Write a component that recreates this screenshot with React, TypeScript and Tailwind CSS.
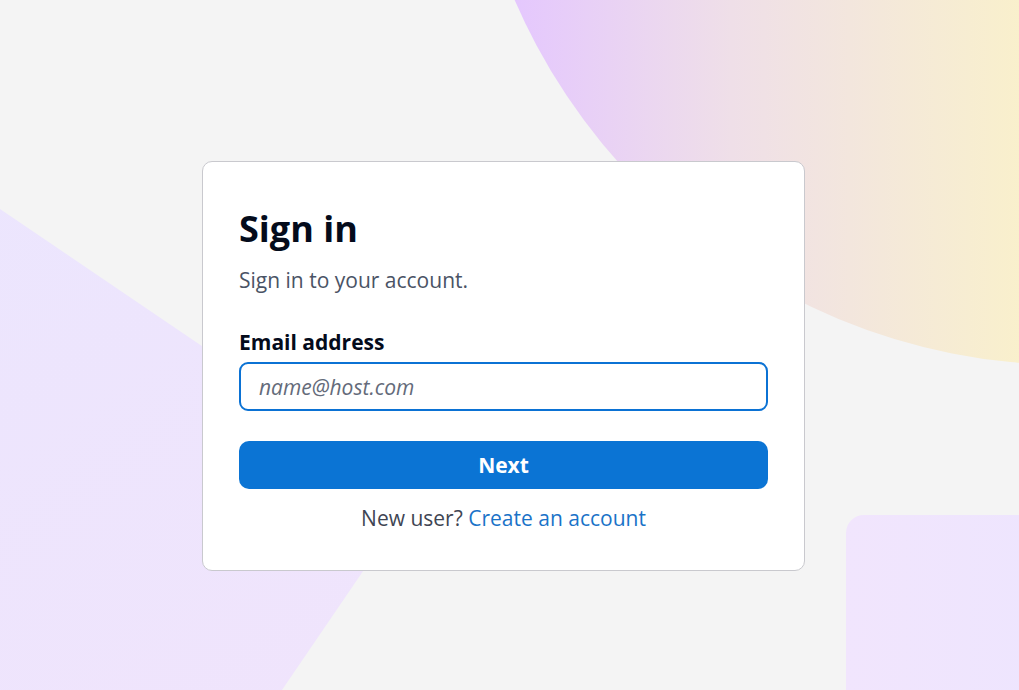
export default function App() {
  return (
    <div
      className="relative h-[690px] w-full overflow-hidden bg-[#f4f4f4] text-[#040b1b]"
      style={{ fontFamily: '"Open Sans", "Noto Sans", sans-serif' }}
    >
      {/* background decorations */}
      <div className="absolute left-[465px] top-[-845px] h-[1210px] w-[1210px] rounded-full bg-linear-to-r from-[#e4c6ff] from-[3%] via-[#efdfe8] via-[22%] to-[#f9f0cc] to-[46%]" />
      <div className="absolute inset-0 bg-linear-to-br from-[#ebe6fe] to-[#f2e3fb] [clip-path:polygon(0px_209px,417px_492px,282px_690px,0px_690px)]" />
      <div className="absolute left-[846px] top-[515px] h-[300px] w-[300px] rounded-[18px] bg-linear-to-r from-[#f1e5fd] to-[#ece5fe]" />

      <div className="relative flex justify-center pr-[12px] pt-[161px]">
        <div className="w-[603px] rounded-[10px] border border-[#c9c9ce] bg-white px-[36px] pb-[38px] pt-[45px]">
          <h1 className="text-[36px] font-bold leading-[44px]">Sign in</h1>
          <p className="mt-[15px] text-[21px] leading-[28px] text-[#4a5365]">Sign in to your account.</p>

          <label className="mt-[34px] block text-[21px] font-bold leading-[28px]">Email address</label>
          <input
            type="email"
            placeholder="name@host.com"
            className="mt-[6px] block h-[49px] w-full rounded-[9px] border-2 border-[#0b72d4] px-[18px] text-[21px] outline-none placeholder:italic placeholder:text-[#646b7a]"
          />

          <button className="mt-[30px] block h-[48px] w-full rounded-[10px] bg-[#0b74d4] pt-[2px] text-[21px] font-bold text-white">
            Next
          </button>

          <p className="mt-[15px] text-center text-[21px] leading-[28px] text-[#404553]">
            New user? <a className="text-[#1a73c8]">Create an account</a>
          </p>
        </div>
      </div>
    </div>
  );
}
